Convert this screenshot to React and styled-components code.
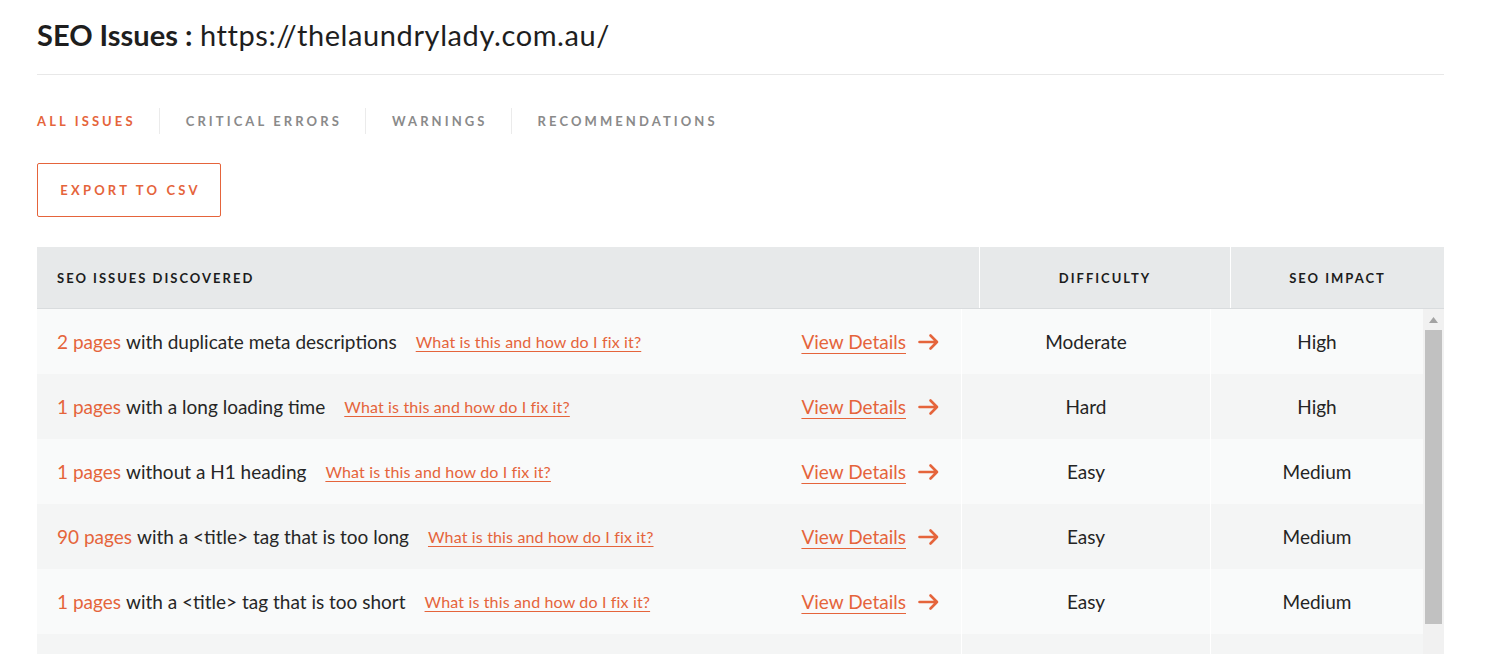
import React from 'react';
import styled, { createGlobalStyle, css } from 'styled-components';

const orange = '#e5643b';

const GlobalStyle = createGlobalStyle`
  html, body {
    margin: 0;
    padding: 0;
    background: #fff;
    overflow: hidden;
  }
  body {
    font-family: 'Lato', 'Open Sans', sans-serif;
    color: #2a2a2a;
  }
`;

const Page = styled.div`
  padding: 16px 43px 0 37px;
`;

const Title = styled.h1`
  margin: 0;
  font-size: 29px;
  line-height: 38px;
  font-weight: 400;
  color: #1e1e1e;
  padding-bottom: 20px;
  border-bottom: 1px solid #e8e8e8;

  b {
    font-weight: 700;
  }

  span {
    letter-spacing: 0.6px;
  }
`;

const Tabs = styled.nav`
  display: flex;
  align-items: center;
  margin-top: 33px;
`;

const Tab = styled.div`
  font-size: 13px;
  font-weight: 700;
  letter-spacing: 3.1px;
  line-height: 26px;
  color: #8a8a8a;
  padding: 0 23px 0 26px;
  border-left: 1px solid #ebebeb;

  &:first-child {
    padding-left: 0;
    border-left: none;
  }

  ${(p) =>
    p.active &&
    css`
      color: ${orange};
    `}
`;

const ExportButton = styled.button`
  margin-top: 29px;
  width: 184px;
  height: 54px;
  background: #fff;
  border: 1px solid ${orange};
  border-radius: 2px;
  font-family: inherit;
  font-size: 13px;
  font-weight: 700;
  letter-spacing: 3.2px;
  color: ${orange};
  padding: 0 0 0 3px;
`;

const Table = styled.div`
  margin-top: 30px;
`;

const HeadRow = styled.div`
  display: grid;
  grid-template-columns: 1fr 250px 213px;
  gap: 1px;
  height: 61px;
  border-bottom: 1px solid #d9dcde;
  background: #fff;
`;

const HeadCell = styled.div`
  display: flex;
  align-items: center;
  justify-content: ${(p) => (p.left ? 'flex-start' : 'center')};
  padding-left: ${(p) => (p.left ? '20px' : '0')};
  background: #e7e9ea;
  font-size: 13px;
  font-weight: 700;
  letter-spacing: 2px;
  color: #1c1c1c;
`;

const Body = styled.div`
  display: flex;
  height: 345px;
`;

const Rows = styled.div`
  flex: 1;
  overflow: hidden;
`;

const Row = styled.div`
  display: grid;
  grid-template-columns: 1fr 248px 212px;
  gap: 1px;
  height: 65px;
  background: #fff;

  & > div {
    background: ${(p) => (p.odd ? '#f4f5f5' : '#f9fafa')};
  }
`;

const IssueCell = styled.div`
  display: flex;
  align-items: center;
  padding: 0 22px 0 20px;
  font-size: 19px;
  color: #262626;
`;

const Count = styled.span`
  color: ${orange};
  margin-right: 5px;
`;

const HelpLink = styled.a`
  margin-left: 19px;
  font-size: 16px;
  letter-spacing: 0.15px;
  color: ${orange};
  text-decoration: underline;
  text-underline-offset: 3px;
  text-decoration-thickness: 1px;
`;

const Spacer = styled.div`
  flex: 1;
`;

const DetailsLink = styled.a`
  display: flex;
  align-items: center;
  gap: 12px;
  font-size: 19px;
  color: ${orange};

  span {
    text-decoration: underline;
    text-underline-offset: 4px;
    text-decoration-thickness: 1px;
  }
`;

const ValueCell = styled.div`
  display: flex;
  align-items: center;
  justify-content: center;
  font-size: 19px;
  color: #242424;
`;

const ScrollTrack = styled.div`
  width: 21px;
  background: #f1f1f1;
  display: flex;
  flex-direction: column;
  align-items: center;
`;

const ScrollArrow = styled.div`
  height: 21px;
  display: flex;
  align-items: center;
  justify-content: center;
`;

const ScrollThumb = styled.div`
  width: 17px;
  height: 294px;
  background: #c1c1c1;
`;

const Arrow = () => (
  <svg width="21" height="18" viewBox="0 0 21 18" fill="none">
    <path
      d="M1.5 9h17.5M12.5 2.5L19 9l-6.5 6.5"
      stroke={orange}
      strokeWidth="2.6"
      strokeLinecap="round"
      strokeLinejoin="round"
    />
  </svg>
);

const issues = [
  { count: '2 pages', text: 'with duplicate meta descriptions', difficulty: 'Moderate', impact: 'High' },
  { count: '1 pages', text: 'with a long loading time', difficulty: 'Hard', impact: 'High' },
  { count: '1 pages', text: 'without a H1 heading', difficulty: 'Easy', impact: 'Medium' },
  { count: '90 pages', text: 'with a <title> tag that is too long', difficulty: 'Easy', impact: 'Medium' },
  { count: '1 pages', text: 'with a <title> tag that is too short', difficulty: 'Easy', impact: 'Medium' },
];

export default function App() {
  return (
    <Page>
      <GlobalStyle />
      <Title>
        <b>SEO Issues :</b> <span>https://thelaundrylady.com.au/</span>
      </Title>
      <Tabs>
        <Tab active>ALL ISSUES</Tab>
        <Tab>CRITICAL ERRORS</Tab>
        <Tab>WARNINGS</Tab>
        <Tab>RECOMMENDATIONS</Tab>
      </Tabs>
      <ExportButton>EXPORT TO CSV</ExportButton>
      <Table>
        <HeadRow>
          <HeadCell left>SEO ISSUES DISCOVERED</HeadCell>
          <HeadCell>DIFFICULTY</HeadCell>
          <HeadCell>SEO IMPACT</HeadCell>
        </HeadRow>
        <Body>
          <Rows>
            {issues.map((issue, i) => (
              <Row key={i} odd={i % 2 === 1}>
                <IssueCell>
                  <Count>{issue.count}</Count>
                  {issue.text}
                  <HelpLink>What is this and how do I fix it?</HelpLink>
                  <Spacer />
                  <DetailsLink>
                    <span>View Details</span>
                    <Arrow />
                  </DetailsLink>
                </IssueCell>
                <ValueCell>{issue.difficulty}</ValueCell>
                <ValueCell>{issue.impact}</ValueCell>
              </Row>
            ))}
            <Row odd>
              <IssueCell />
              <ValueCell />
              <ValueCell />
            </Row>
          </Rows>
          <ScrollTrack>
            <ScrollArrow>
              <svg width="9" height="6" viewBox="0 0 9 6">
                <path d="M4.5 0L9 6H0z" fill="#a3a3a3" />
              </svg>
            </ScrollArrow>
            <ScrollThumb />
          </ScrollTrack>
        </Body>
      </Table>
    </Page>
  );
}
